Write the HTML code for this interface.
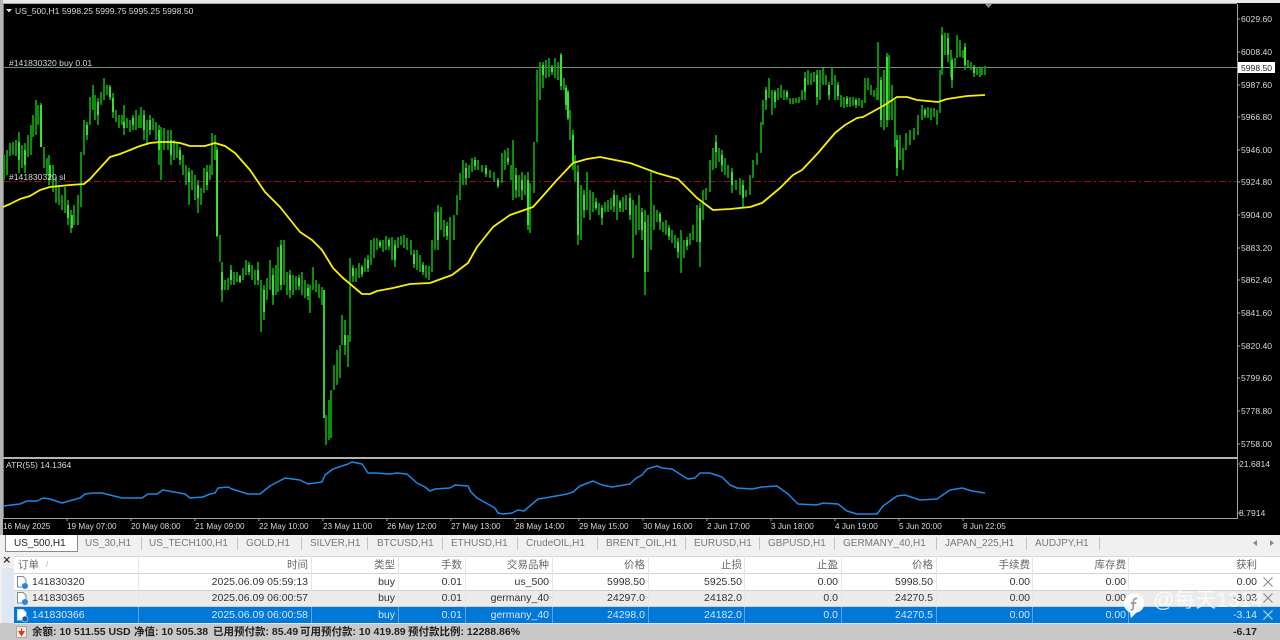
<!DOCTYPE html>
<html><head><meta charset="utf-8"><title>US_500,H1</title>
<style>
html,body{margin:0;padding:0;background:#f0f0f0}
#w{position:relative;width:1280px;height:640px;overflow:hidden;background:#f0f0f0;font-family:"Liberation Sans","Noto Sans CJK SC",sans-serif}
#w div,#w span{position:absolute;white-space:nowrap}
.c{left:0;top:0}
.t{font-size:10px;color:#777;top:537px;line-height:14px}
.s{top:537px;width:1px;height:13px;background:#c4c4c4}
.row{left:0;width:1280px;font-size:10.5px;line-height:16px;height:16px;color:#333}
.row span{top:0}
.hd{color:#666;font-size:10.5px}
.v{top:0;width:1px;height:100%}
</style></head><body><div id="w">
<svg class="c" style="position:absolute" width="1280" height="535" viewBox="0 0 1280 535" font-family="Liberation Sans,sans-serif" font-size="8.6" fill="#d8d8d8">
<rect width="1280" height="535" fill="#000"/>
<rect width="1280" height="3" fill="#e8e8e8"/>
<rect y="3" width="1237" height="1" fill="#a8a8a8"/>
<rect width="3" height="535" fill="#b4b4b4"/>
<rect x="3" y="4" width="1" height="514" fill="#777"/>
<rect x="1237" y="4" width="1" height="515" fill="#a0a0a0"/>
<rect x="3" y="518" width="1235" height="1" fill="#a0a0a0"/>
<rect x="3" y="457" width="1235" height="2" fill="#b4b4b4"/>
<path d="M985 4h7l-3.500 4z" fill="#8a8f98"/>
<path d="M6 9h6l-3 3.500z" fill="#ddd"/>
<path d="M4 67.500H1237" stroke="#6f946f" stroke-width="1"/>
<path d="M4 181.500H1237" stroke="#a01010" stroke-width="1" stroke-dasharray="7 3 2 3"/>
<path fill="none" stroke="#0a960a" stroke-width="1.900" d="M4 155V180M7 150V175M10 143V156M13 142V155M16 140V156M19 132V173M22 145V168M25 143V173M28 135V157M31 125V155M33 115V137M36 100V135M38 105V125M41 103V147M44 147V168M47 158V175M49 155V185M53 165V192M56 177V203M59 185V205M62 195V210M65 187V213M68 200V225M71 210V233M74 205V225M78 195V225M81 152V207M84 120V155M87 122V140M90 97V125M93 85V110M95 95V120M98 98V125M101 92V105M104 78V100M107 85V95M110 85V100M113 93V118M116 110V122M119 115V128M122 115V125M124 105V135M127 118V128M130 120V132M133 115V130M136 110V130M139 115V128M141 107V128M144 110V140M147 120V145M150 115V135M153 118V130M156 122V140M159 125V165M161 127V180M164 128V150M168 130V150M171 130V165M174 140V160M177 143V158M180 147V165M183 155V175M186 165V185M189 168V205M192 170V190M195 175V200M198 180V213M201 188V205M204 168V193M207 165V190M210 165V180M212 133V175M215 135V160M217 147V237M220 235V262M222 262V302M225 280V290M228 278V290M231 265V285M234 272V285M237 272V282M240 275V283M243 268V280M246 260V275M249 262V275M252 265V280M255 270V285M258 262V285M261 280V332M264 285V320M267 278V300M270 260V290M273 268V305M276 265V295M278 247V292M281 240V290M284 240V285M287 272V295M290 270V298M293 275V295M296 276V290M299 275V290M302 272V295M305 280V298M308 284V300M310 285V313M313 267V290M316 280V292M319 284V298M322 287V305M326 415V445M329 400V440M331 390V438M334 365V390M337 350V385M340 345V378M342 315V345M345 320V355M348 335V367M350 258V342M353 265V282M356 268V282M359 263V278M362 265V277M365 258V272M368 255V272M371 240V265M374 238V258M377 238V250M380 240V248M383 240V252M386 236V250M389 238V250M392 237V260M395 240V267M398 237V248M401 236V245M404 235V248M407 238V250M411 240V255M414 250V268M417 250V270M420 255V272M423 262V275M426 265V278M429 266V280M432 240V272M435 212V250M438 205V250M441 207V230M444 220V237M447 222V240M450 217V270M454 215V240M457 195V215M460 173V200M463 160V185M466 163V185M469 165V178M472 158V172M475 157V170M478 160V170M482 165V172M486 165V177M490 170V178M494 172V182M498 178V188M502 153V183M505 150V170M508 148V165M511 165V180M513 140V200M516 168V198M519 175V197M522 172V200M525 175V195M528 172V230M530 183V233M534 142V193M537 70V142M540 62V100M543 62V88M546 60V78M549 58V77M552 65V75M555 58V78M558 62V80M561 53V90M564 78V90M566 85V110M568 90V120M570 110V140M573 130V170M575 155V182M578 165V245M581 185V240M584 190V218M587 172V210M590 190V220M593 192V212M596 198V210M599 203V215M602 205V225M605 202V212M608 200V212M611 198V210M614 190V212M617 195V220M620 200V212M623 197V212M626 195V210M630 193V220M633 200V258M636 205V235M639 195V230M642 208V240M645 210V295M648 215V272M651 172V250M654 205V230M657 210V222M660 212V230M663 222V232M666 220V235M669 225V240M672 230V243M675 235V248M678 238V258M681 230V273M684 240V258M687 237V250M690 233V245M693 225V240M697 205V242M700 203V267M703 190V220M706 188V200M710 160V192M713 148V170M716 135V168M719 148V162M722 150V172M725 158V175M728 165V178M732 168V193M736 180V190M740 178V195M743 180V207M746 190V197M750 175V195M753 160V178M757 153V165M761 122V153M763 100V125M766 87V110M769 78V98M772 90V115M775 90V108M778 88V100M781 85V98M784 90V100M787 90V100M790 98V104M793 98V104M796 98V103M799 97V103M802 90V100M805 72V100M808 70V85M811 73V85M814 72V82M817 70V105M820 70V100M823 68V85M826 75V85M829 82V100M832 67V85M835 75V100M838 82V100M841 95V107M844 97V108M847 96V107M850 97V107M853 97V106M856 98V108M859 98V106M862 100V108M865 78V103M868 78V90M871 85V95M874 90V97M877 88V100M878 42V100M881 77V127M884 70V130M887 53V127M889 55V120M892 85V120M895 100V147M897 135V176M900 135V160M903 148V170M906 133V150M910 130V145M914 128V140M918 115V135M922 105V120M925 108V118M928 107V118M931 108V120M934 108V117M937 110V125M940 70V113M942 27V75M945 33V55M948 33V62M951 50V77M952 58V88M955 58V68M957 35V58M960 40V57M963 50V58M965 43V70M968 60V67M971 62V70M974 65V77M977 67V75M980 68V77M982 67V75M985 66V75"/>
<path fill="none" stroke="#3cf23c" stroke-width="1.700" d="M19 142V160M25 150V165M41 105V147M50 165V180M68 205V218M72 215V228M87 125V135M98 102V115M110 87V97M113 98V112M124 122V128M133 118V125M144 115V130M150 120V130M159 130V150M171 140V155M180 150V160M189 172V182M198 185V198M207 172V185M217 150V236M222 272V290M231 270V280M240 276V282M249 265V272M258 270V280M264 290V312M273 275V295M281 245V285M290 275V290M299 278V286M308 288V296M324 290V418M345 335V345M353 268V276M362 267V274M368 260V268M380 242V246M389 240V246M395 245V260M414 254V264M423 265V272M438 212V240M447 226V236M466 168V178M475 160V166M486 168V174M498 180V186M508 158V162M516 175V190M522 180V190M528 180V225M543 65V75M552 67V72M561 55V86M566 88V105M568 92V118M573 135V162M578 172V235M584 195V210M596 202V208M602 208V218M614 195V206M620 202V208M630 198V215M642 212V230M645 222V272M660 214V222M669 228V236M678 242V252M687 240V246M700 208V242M716 142V152M722 155V165M732 172V185M743 185V198M766 90V100M775 92V102M787 92V97M805 78V92M817 75V97M829 85V95M838 85V96M847 98V104M856 100V105M881 80V120M887 57V120M897 140V168M925 110V115M942 35V68M948 38V55M952 60V80M965 47V65M974 67V73"/>
<path fill="none" stroke="#f6f200" stroke-width="1.800" stroke-linejoin="round" d="M3 207L10 204L20 199L30 196L40 190L50 187L60 186L70 185L84 184L90 179L100 168L110 157L120 154L130 150L140 146L150 143L160 142L172 142L180 143L190 146L205 146L215 143L225 146L235 153L250 170L265 192L280 207L300 232L312 240L322 250L333 268L343 278L362 294L370 294L377 291L393 288L410 284L430 283L452 275L468 263L477 247L493 227L510 215L533 207L557 180L573 163L587 159L600 157L630 163L657 173L678 179L697 198L713 210L730 209L750 207L762 203L780 188L793 175L802 170L818 153L835 133L845 125L857 118L863 117L883 106L897 97L907 97L917 100L938 102L947 99L967 96L985 95"/>
<path fill="none" stroke="#1e88e5" stroke-width="1.500" stroke-linejoin="round" d="M3 506L20 504L27 501L37 501L43 498L50 499L62 503L80 498L85 494L93 493L102 493L122 498L142 498L148 494L157 494L163 490L185 494L190 498L203 497L210 494L215 493L218 488L228 487L232 489L248 494L260 494L270 486L285 478L300 480L308 484L322 482L325 475L333 469L348 464L352 462L362 464L368 473L375 473L390 474L397 473L407 474L417 483L425 487L430 491L435 489L450 488L455 485L468 486L471 492L477 498L495 508L498 513L503 514L512 513L518 510L524 511L538 499L545 498L567 494L573 492L580 486L593 481L602 485L612 487L630 484L635 479L642 475L647 469L657 466L662 468L672 469L683 476L688 479L695 478L700 473L710 473L722 477L730 485L737 488L752 489L762 487L777 486L788 494L798 504L817 505L823 503L838 504L847 511L857 514L877 514L883 506L897 496L905 495L920 500L937 499L950 490L962 488L972 491L985 493"/>
<path stroke="#a0a0a0" d="M1238 19h2M1238 52h2M1238 85h2M1238 117h2M1238 150h2M1238 182h2M1238 215h2M1238 248h2M1238 280h2M1238 313h2M1238 346h2M1238 378h2M1238 411h2M1238 444h2M1238 464h2M1238 513h2M67 519v2M131 519v2M195 519v2M259 519v2M323 519v2M387 519v2M451 519v2M515 519v2M579 519v2M643 519v2M707 519v2M771 519v2M835 519v2M899 519v2M963 519v2"/>
<g>
<text x="15" y="14">US_500,H1</text><text x="62" y="14">5998.25 5999.75 5995.25 5998.50</text>
<text x="9" y="66">#141830320 buy 0.01</text>
<text x="9" y="180">#141830320 sl</text>
<text x="6" y="468">ATR(55) 14.1364</text>
<text x="1241" y="22">6029.60</text><text x="1241" y="55">6008.40</text><text x="1241" y="88">5987.60</text><text x="1241" y="120">5966.80</text><text x="1241" y="153">5946.00</text><text x="1241" y="185">5924.80</text><text x="1241" y="218">5904.00</text><text x="1241" y="251">5883.20</text><text x="1241" y="283">5862.40</text><text x="1241" y="316">5841.60</text><text x="1241" y="349">5820.40</text><text x="1241" y="381">5799.60</text><text x="1241" y="414">5778.80</text><text x="1241" y="447">5758.00</text>
<text x="1239" y="467">21.6814</text><text x="1239" y="516">8.7914</text>
</g>
<rect x="1238" y="62" width="37" height="11" fill="#fff"/>
<text x="1241" y="71" fill="#222">5998.50</text>
<g font-size="8.200">
<text x="3" y="529">16 May 2025</text><text x="67" y="529">19 May 07:00</text><text x="131" y="529">20 May 08:00</text><text x="195" y="529">21 May 09:00</text><text x="259" y="529">22 May 10:00</text><text x="323" y="529">23 May 11:00</text><text x="387" y="529">26 May 12:00</text><text x="451" y="529">27 May 13:00</text><text x="515" y="529">28 May 14:00</text><text x="579" y="529">29 May 15:00</text><text x="643" y="529">30 May 16:00</text><text x="707" y="529">2 Jun 17:00</text><text x="771" y="529">3 Jun 18:00</text><text x="835" y="529">4 Jun 19:00</text><text x="899" y="529">5 Jun 20:00</text><text x="963" y="529">8 Jun 22:05</text>
</g>
</svg>

<div style="left:0;top:535px;width:1280px;height:17px;background:#f0f0f0"></div>
<div style="left:5px;top:535px;width:71px;height:16px;background:#fff;border:1px solid #8a8a8a;border-top:0"></div>
<span class="t" style="left:14px;color:#222">US_500,H1</span>
<span class="t" style="left:85px">US_30,H1</span><div class="s" style="left:141px"></div>
<span class="t" style="left:149px">US_TECH100,H1</span><div class="s" style="left:237px"></div>
<span class="t" style="left:246px">GOLD,H1</span><div class="s" style="left:301px"></div>
<span class="t" style="left:310px">SILVER,H1</span><div class="s" style="left:367px"></div>
<span class="t" style="left:377px">BTCUSD,H1</span><div class="s" style="left:442px"></div>
<span class="t" style="left:451px">ETHUSD,H1</span><div class="s" style="left:517px"></div>
<span class="t" style="left:526px">CrudeOIL,H1</span><div class="s" style="left:597px"></div>
<span class="t" style="left:606px">BRENT_OIL,H1</span><div class="s" style="left:685px"></div>
<span class="t" style="left:694px">EURUSD,H1</span><div class="s" style="left:759px"></div>
<span class="t" style="left:768px">GBPUSD,H1</span><div class="s" style="left:834px"></div>
<span class="t" style="left:843px">GERMANY_40,H1</span><div class="s" style="left:936px"></div>
<span class="t" style="left:945px">JAPAN_225,H1</span><div class="s" style="left:1026px"></div>
<span class="t" style="left:1035px">AUDJPY,H1</span><div class="s" style="left:1099px"></div>
<svg style="position:absolute;left:1250px;top:539px" width="26" height="8"><path d="M7 1L3 4L7 7zM20 1L24 4L20 7z" fill="#888"/></svg>

<div style="left:0;top:552px;width:14px;height:72px;background:#f0f0f0"></div>
<div style="left:2px;top:568px;width:12px;height:56px;background:#dfe8f2"></div>
<svg style="position:absolute;left:3px;top:556px" width="8" height="8"><path d="M1 1L6.500 6.500M6.500 1L1 6.500" stroke="#222" stroke-width="1.200"/></svg>

<div style="left:14px;top:556px;width:1266px;height:17px;background:#fff;border-top:1px solid #d8d8d8;box-sizing:border-box"></div>
<div style="left:14px;top:573px;width:1266px;height:1px;background:#d4d4d4"></div>
<div style="left:14px;top:574px;width:1266px;height:16px;background:#fff"></div>
<div style="left:14px;top:590px;width:1266px;height:1px;background:#cfcfcf"></div>
<div style="left:14px;top:591px;width:1266px;height:15px;background:#ebebeb"></div>
<div style="left:14px;top:606px;width:1266px;height:1px;background:#cfcfcf"></div>
<div style="left:14px;top:607px;width:1266px;height:16px;background:#0078d7"></div>
<div style="left:0;top:623px;width:1280px;height:17px;background:#c8c8c8"></div>
<div style="left:14px;top:623px;width:1266px;height:1px;background:#e4e4e4"></div>

<svg style="position:absolute;left:0;top:556px" width="1280" height="68"><path stroke="#e6e6e6" d="M138.500 0V67M311.500 0V67M398.500 0V67M465.500 0V67M552.500 0V67M648.500 0V67M744.500 0V67M841.500 0V67M936.500 0V67M1032.500 0V67M1128.500 0V67"/><path stroke="#5aa4e4" d="M138.500 51V67M311.500 51V67M398.500 51V67M465.500 51V67M552.500 51V67M648.500 51V67M744.500 51V67M841.500 51V67M936.500 51V67M1032.500 51V67M1128.500 51V67"/></svg>

<div class="row hd" style="top:557px">
<span style="left:18px">订单</span><span style="left:46px;color:#aaa;font-size:8px">/</span>
<span style="right:972px">时间</span><span style="right:885px">类型</span><span style="right:818px">手数</span><span style="right:731px">交易品种</span><span style="right:635px">价格</span><span style="right:538px">止损</span><span style="right:442px">止盈</span><span style="right:347px">价格</span><span style="right:250px">手续费</span><span style="right:154px">库存费</span><span style="right:23px">获利</span>
</div>
<div class="row" style="top:574px">
<span style="left:32px">141830320</span><span style="right:972px">2025.06.09 05:59:13</span><span style="right:885px">buy</span><span style="right:818px">0.01</span><span style="right:731px">us_500</span><span style="right:635px">5998.50</span><span style="right:538px">5925.50</span><span style="right:442px">0.00</span><span style="right:347px">5998.50</span><span style="right:250px">0.00</span><span style="right:154px">0.00</span><span style="right:23px">0.00</span>
</div>
<div class="row" style="top:590px">
<span style="left:32px">141830365</span><span style="right:972px">2025.06.09 06:00:57</span><span style="right:885px">buy</span><span style="right:818px">0.01</span><span style="right:731px">germany_40</span><span style="right:635px">24297.0</span><span style="right:538px">24182.0</span><span style="right:442px">0.0</span><span style="right:347px">24270.5</span><span style="right:250px">0.00</span><span style="right:154px">0.00</span><span style="right:23px">-3.03</span>
</div>
<div class="row" style="top:607px;color:#d4e8fa">
<span style="left:32px">141830366</span><span style="right:972px">2025.06.09 06:00:58</span><span style="right:885px">buy</span><span style="right:818px">0.01</span><span style="right:731px">germany_40</span><span style="right:635px">24298.0</span><span style="right:538px">24182.0</span><span style="right:442px">0.0</span><span style="right:347px">24270.5</span><span style="right:250px">0.00</span><span style="right:154px">0.00</span><span style="right:23px">-3.14</span>
</div>

<svg style="position:absolute;left:15px;top:575px" width="14" height="50">
<path d="M2.500 1.500H8L11 4.500V12H2.500z" fill="#fff" stroke="#7c8a98"/><circle cx="10" cy="11" r="3" fill="#2a86d8"/>
<path d="M2.500 17.500H8L11 20.500V28H2.500z" fill="#fff" stroke="#7c8a98"/><circle cx="10" cy="27" r="3" fill="#2a86d8"/>
<path d="M2.500 34.500H8L11 37.500V45H2.500z" fill="#fff" stroke="#cfe2f5"/><circle cx="10" cy="44" r="3" fill="#0a5fb0" stroke="#cfe2f5" stroke-width=".6"/>
</svg>
<svg style="position:absolute;left:1262px;top:576px" width="13" height="46"><path d="M1.500 1.500L10.500 10.500M10.500 1.500L1.500 10.500M1.500 17.500L10.500 26.500M10.500 17.500L1.500 26.500" stroke="#8a8a8a" stroke-width="1.100"/><path d="M1.500 34.500L10.500 43.500M10.500 34.500L1.500 43.500" stroke="#bcd8f2" stroke-width="1.100"/></svg>

<svg style="position:absolute;left:16px;top:626px" width="11" height="12"><rect x=".5" y=".5" width="10" height="11" fill="#f4e4dc" stroke="#a8a8a8"/><path d="M5.500 2.500V6M3 5.500L5.500 9.500L8 5.500z" fill="#d8331f" stroke="#d8331f"/></svg>
<div class="row" style="top:624px;font-weight:bold;color:#222;font-size:10.5px">
<span style="left:32px">余额: 10 511.55 USD</span><span style="left:134px">净值: 10 505.38</span><span style="left:213px">已用预付款: 85.49</span><span style="left:300px">可用预付款: 10 419.89</span><span style="left:408px">预付款比例: 12288.86%</span><span style="right:23px">-6.17</span>
</div>

<svg style="position:absolute;left:1122px;top:592px" width="24" height="27" viewBox="0 0 30 34"><path d="M15 2C7 2 2 8 2 14C2 20 6 24 10 26L11 33L18 26C24 25 28 20 28 14C28 8 23 2 15 2z" fill="#fff" opacity=".95"/><path d="M19 8C15 8 14 10 14 13V20C14 22 12 23 11 22M11 14H18" fill="none" stroke="#9a9a9a" stroke-width="2.200"/></svg>
<span style="left:1153px;top:587px;font-size:21px;line-height:28px;color:rgba(255,255,255,.75);font-family:'Liberation Sans','WenQuanYi Zen Hei',sans-serif">@每天1314</span>
</div></body></html>
